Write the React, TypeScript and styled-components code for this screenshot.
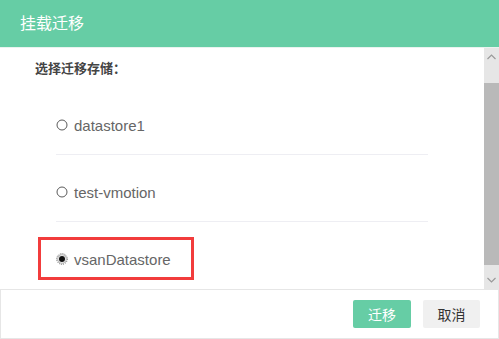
import React from "react";
import styled, { createGlobalStyle } from "styled-components";

const GREEN = "#66cda5";

const Global = createGlobalStyle`
  html, body { margin: 0; padding: 0; background: #ffffff; }
  body { font-family: "Liberation Sans", "Noto Sans CJK SC", sans-serif; }
  *, *::before, *::after { box-sizing: border-box; }
`;

const Dialog = styled.div`
  width: 499px;
  height: 339px;
  display: flex;
  flex-direction: column;
  background: #fff;
  overflow: hidden;
`;

const Header = styled.div`
  height: 48px;
  flex: none;
  background: ${GREEN};
  color: #fff;
  font-size: 16px;
  line-height: 48px;
  padding-left: 20px;
  border-bottom: 1px solid #e9f3ef;
`;

const Body = styled.div`
  height: 241px;
  flex: none;
  display: flex;
`;

const Content = styled.div`
  flex: 1;
  overflow: hidden;
  padding-top: 11px;
`;

const Title = styled.div`
  font-size: 13px;
  font-weight: bold;
  line-height: 20px;
  color: #444;
  padding-left: 35px;
`;

const List = styled.div`
  margin: 9px 0 0 56px;
  width: 372px;
`;

const Row = styled.div<{ $last?: boolean }>`
  padding: 27px 0 19px;
  border-bottom: ${(p) => (p.$last ? "none" : "1px solid #eeeef3")};
`;

const Option = styled.label<{ $highlight?: boolean }>`
  position: relative;
  display: inline-flex;
  align-items: center;
  gap: 6px;
  height: 20px;
  font-size: 15px;
  color: #666;
  cursor: pointer;
  &::before {
    content: "";
    display: ${(p) => (p.$highlight ? "block" : "none")};
    position: absolute;
    left: -18px;
    top: -12px;
    width: 156px;
    height: 43px;
    border: 3px solid #f23c3c;
  }
`;

const RadioIcon = styled.svg`
  width: 12px;
  height: 12px;
  flex: none;
  display: block;
`;

const Radio = ({ checked }: { checked?: boolean }) =>
  checked ? (
    <RadioIcon viewBox="0 0 12 12">
      <circle cx="6" cy="6" r="5.3" fill="none" stroke="#555" strokeWidth="0.9" strokeDasharray="1 1" />
      <circle cx="6" cy="6" r="4.2" fill="#fff" stroke="#777" strokeWidth="0.6" />
      <circle cx="6" cy="6" r="3" fill="#111" />
    </RadioIcon>
  ) : (
    <RadioIcon viewBox="0 0 12 12">
      <circle cx="6" cy="6" r="5" fill="#fff" stroke="#5a5a5a" strokeWidth="1" />
    </RadioIcon>
  );

const Scrollbar = styled.div`
  width: 15px;
  flex: none;
  background: #e6e6e6;
  display: flex;
  flex-direction: column;
`;

const ScrollButton = styled.div<{ $h: number; $down?: boolean }>`
  height: ${(p) => p.$h}px;
  display: flex;
  justify-content: center;
  padding-top: ${(p) => (p.$down ? 12 : 6)}px;
`;

const Thumb = styled.div`
  height: 182px;
  background: #b9b9b9;
`;

const Chevron = styled.svg`
  width: 9px;
  height: 6px;
  display: block;
`;

const Footer = styled.div`
  height: 50px;
  flex: none;
  border: 1px solid #e6e6e6;
  display: flex;
  justify-content: flex-end;
  align-items: center;
  gap: 12px;
  padding-right: 18px;
`;

const Button = styled.button<{ $primary?: boolean }>`
  height: 28px;
  width: ${(p) => (p.$primary ? 58 : 57)}px;
  border: none;
  border-radius: 2px;
  font-family: inherit;
  font-size: 14px;
  background: ${(p) => (p.$primary ? GREEN : "#f0f0f0")};
  color: ${(p) => (p.$primary ? "#fff" : "#333")};
  padding: 0;
  cursor: pointer;
`;

const options = [
  { name: "datastore1" },
  { name: "test-vmotion" },
  { name: "vsanDatastore", checked: true },
];

export default function App() {
  return (
    <>
      <Global />
      <Dialog>
        <Header>挂载迁移</Header>
        <Body>
          <Content>
            <Title>选择迁移存储：</Title>
            <List>
              {options.map((o, i) => (
                <Row key={o.name} $last={i === options.length - 1}>
                  <Option $highlight={o.checked}>
                    <Radio checked={o.checked} />
                    {o.name}
                  </Option>
                </Row>
              ))}
            </List>
          </Content>
          <Scrollbar>
            <ScrollButton $h={35}>
              <Chevron viewBox="0 0 9 6">
                <path d="M0.5 5 L4.5 1 L8.5 5" fill="none" stroke="#9a9a9a" strokeWidth="1.2" />
              </Chevron>
            </ScrollButton>
            <Thumb />
            <ScrollButton $h={24} $down>
              <Chevron viewBox="0 0 9 6">
                <path d="M0.5 1 L4.5 5 L8.5 1" fill="none" stroke="#9a9a9a" strokeWidth="1.2" />
              </Chevron>
            </ScrollButton>
          </Scrollbar>
        </Body>
        <Footer>
          <Button $primary>迁移</Button>
          <Button>取消</Button>
        </Footer>
      </Dialog>
    </>
  );
}
